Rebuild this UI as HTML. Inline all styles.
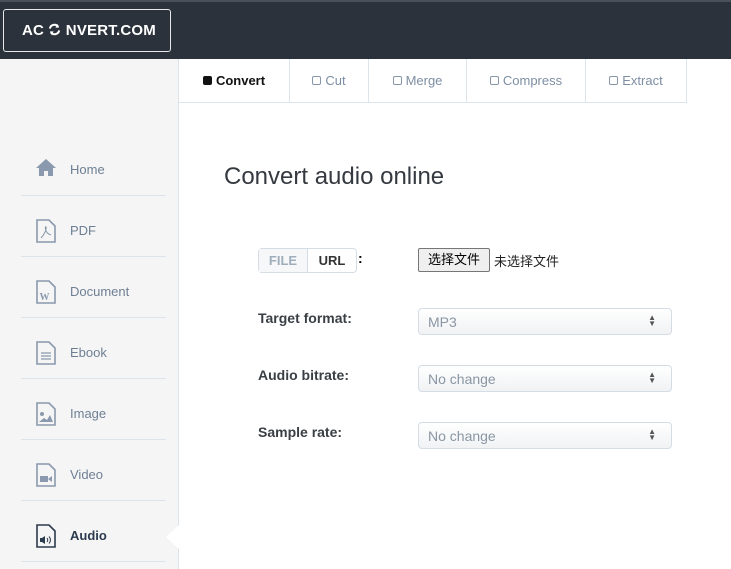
<!DOCTYPE html><html><head><meta charset="utf-8"><style>
*{margin:0;padding:0;box-sizing:border-box}
body{width:731px;height:569px;overflow:hidden;font-family:"Liberation Sans","Noto Sans CJK SC",sans-serif;background:#fff;position:relative}
.top{position:absolute;left:0;top:0;width:731px;height:59px;background:#2b323b;border-top:2px solid #4a5058}
.logo{position:absolute;left:3px;top:7px;width:168px;height:43px;border:1px solid #e8e8e8;border-radius:3px;color:#fff;font-weight:bold;font-size:15px;line-height:41px;padding-left:18px;letter-spacing:0.2px}
.side{position:absolute;left:0;top:59px;width:179px;height:510px;background:#f5f5f5;border-right:1px solid #dbe3ea}
.item{position:absolute;left:21px;width:145px;height:61px;border-bottom:1px solid #dde3ea;font-size:13px;color:#6e7f94}
.item span{position:absolute;left:49px;top:27px}
.item svg{position:absolute;left:15px;top:23px}
.tabs{position:absolute;top:59px;left:179px;height:44px;border-bottom:1px solid #dde5ec;display:flex}
.tab{height:43px;border-right:1px solid #dde5ec;font-size:13px;color:#7d8ea3;line-height:43px;text-align:center}
.tab i{display:inline-block;width:9px;height:9px;border:1px solid #8796a8;border-radius:2px;margin-right:4px;vertical-align:0}
h1{position:absolute;left:224px;top:163px;font-size:24px;font-weight:normal;color:#353a40}
.lbl{position:absolute;left:258px;font-size:14px;font-weight:bold;color:#3a3f45}
.sel{position:absolute;left:418px;width:254px;height:27px;border:1px solid #d4dde6;border-radius:4px;background:linear-gradient(#fff,#f0f2f4);font-size:14px;color:#8a96a3;line-height:27px;padding-left:9px}
.sel b{position:absolute;right:15px;top:6px;font-size:8px;line-height:6px;color:#555;font-weight:normal}
</style></head><body>
<div class="top"><div class="logo">AC <svg width="13" height="13" viewBox="0 0 14 14" style="vertical-align:-1px"><path d="M2 6a5 5 0 0 1 9-2M12 8a5 5 0 0 1-9 2" fill="none" stroke="#fff" stroke-width="2.2"/><path d="M10 1l2 4-4 0z M4 13l-2-4 4 0z" fill="#fff"/></svg> NVERT.COM</div></div>
<div class="side">
<div class="item" style="top:76px;height:61px"><svg width="20" height="18" viewBox="0 0 20 18"><path d="M10 1L0 10h3v8h5v-5h4v5h5v-8h3z" fill="#8a99ad"/></svg><span>Home</span></div>
<div class="item" style="top:137px"><svg width="20" height="24" viewBox="0 0 20 24"><path d="M1 1h12l6 6v16H1z" fill="none" stroke="#8a99ad" stroke-width="1.6"/><path d="M5 19c3-3 6-9 5-11s-2 6 5 8" fill="none" stroke="#8a99ad"/></svg><span>PDF</span></div>
<div class="item" style="top:198px"><svg width="20" height="24" viewBox="0 0 20 24"><path d="M1 1h12l6 6v16H1z" fill="none" stroke="#8a99ad" stroke-width="1.6"/><text x="3.5" y="20" font-size="10" font-family="Liberation Serif" font-weight="bold" fill="#8a99ad">W</text></svg><span>Document</span></div>
<div class="item" style="top:259px"><svg width="20" height="24" viewBox="0 0 20 24"><path d="M1 1h12l6 6v16H1z" fill="none" stroke="#8a99ad" stroke-width="1.6"/><path d="M5 12h10M5 15h10M5 18h10" stroke="#8a99ad" stroke-width="1.3"/></svg><span>Ebook</span></div>
<div class="item" style="top:320px"><svg width="20" height="24" viewBox="0 0 20 24"><path d="M1 1h12l6 6v16H1z" fill="none" stroke="#8a99ad" stroke-width="1.6"/><circle cx="6" cy="12" r="2" fill="#8a99ad"/><path d="M3 20l5-4 3 2 3-5 3 7z" fill="#8a99ad"/></svg><span>Image</span></div>
<div class="item" style="top:381px"><svg width="20" height="24" viewBox="0 0 20 24"><path d="M1 1h12l6 6v16H1z" fill="none" stroke="#8a99ad" stroke-width="1.6"/><rect x="4" y="13" width="8" height="6" fill="#8a99ad"/><path d="M12 16l4-3v6z" fill="#8a99ad"/></svg><span>Video</span></div>
<div class="item" style="top:442px;color:#2c3a4d"><svg width="20" height="24" viewBox="0 0 20 24"><path d="M1 1h12l6 6v16H1z" fill="none" stroke="#2c3a4d" stroke-width="1.6"/><path d="M4 14h2l3-2v8l-3-2H4z" fill="#2c3a4d"/><path d="M11 14q1.5 2 0 4M13 12.5q3 3.5 0 7" fill="none" stroke="#2c3a4d"/></svg><span style="font-weight:bold">Audio</span></div>
<div style="position:absolute;left:166px;top:465px;width:14px;height:26px;background:#fff;clip-path:polygon(100% 0,0 50%,100% 100%)"></div>
</div>
<div class="tabs">
<div class="tab" style="width:111px;color:#111;font-weight:bold"><i style="background:#111;border-color:#111"></i>Convert</div>
<div class="tab" style="width:79px"><i></i>Cut</div>
<div class="tab" style="width:98px"><i></i>Merge</div>
<div class="tab" style="width:119px"><i></i>Compress</div>
<div class="tab" style="width:101px"><i></i>Extract</div>
</div>
<h1>Convert audio online</h1>
<div style="position:absolute;left:258px;top:248px;width:99px;height:25px;border:1px solid #d4dde6;border-radius:4px;font-size:13px;font-weight:bold;line-height:23px;display:flex">
<div style="width:49px;text-align:center;color:#a0adbb;background:#f5f7f9;border-right:1px solid #d4dde6">FILE</div><div style="flex:1;text-align:center;color:#333">URL</div></div>
<div style="position:absolute;left:358px;top:250px;font-weight:bold;font-size:14px">:</div>
<div style="position:absolute;left:418px;top:248px;width:72px;height:24px;border:1px solid #767676;border-radius:2px;background:#efefef;font-size:13px;line-height:22px;text-align:center">选择文件</div>
<div style="position:absolute;left:494px;top:251px;font-size:13px;color:#222">未选择文件</div>
<div class="lbl" style="top:310px">Target format:</div><div class="sel" style="top:308px">MP3<b>▲<br>▼</b></div>
<div class="lbl" style="top:367px">Audio bitrate:</div><div class="sel" style="top:365px">No change<b>▲<br>▼</b></div>
<div class="lbl" style="top:424px">Sample rate:</div><div class="sel" style="top:422px">No change<b>▲<br>▼</b></div>
</body></html>
